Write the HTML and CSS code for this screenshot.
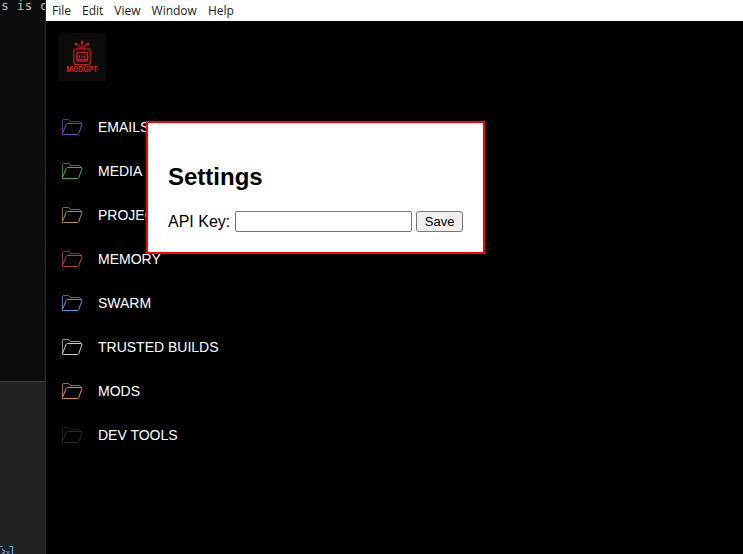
FILE: index.html
```html
<!DOCTYPE html>
<html lang="en">
<head>
<meta charset="utf-8">
<title>ModGPT</title>
<link rel="stylesheet" href="styles.css">
</head>
<body>
<svg class="defs" aria-hidden="true">
  <symbol id="folder" viewBox="0 0 24 24" fill="none" stroke="currentColor">
    <path class="back" d="M2.5 19.5V5.5Q2.5 4.500 3.5 4.500H8.500L10.500 6.500H19.500Q20.500 6.500 20.500 8.500"/>
    <path d="M2.5 18.5L6 9.500Q6.500 8.500 7.500 8.500H21Q22.200 8.500 21.900 9.500L18.900 18.500Q18.500 19.500 17.500 19.500H3.500Q2.500 19.500 2.500 18.500"/>
  </symbol>
</svg>
<div class="desktop">
  <aside class="editor">
    <div class="terminal">s is d</div>
    <div class="dock">
      <svg viewBox="0 0 16 9" fill="none" stroke="#6aa0dc" aria-hidden="true">
        <path d="M0 1.500H2.500M9 1.500H12.500V9M2 4L5 6.500L2 9" stroke-width="1.200"/>
        <path d="M6.500 6L9.500 9M9.500 6L6.500 9"/>
      </svg>
    </div>
  </aside>
  <div class="window">
    <nav class="menubar">
      <button>File</button><button>Edit</button><button>View</button><button>Window</button><button>Help</button>
    </nav>
    <main class="content">
      <div class="logo">
        <svg viewBox="0 0 48 33" fill="none" stroke="#c91c1c" role="img" aria-label="Robot">
          <rect x="15.800" y="15.800" width="16.400" height="15.700" rx="2" stroke-width="1.200"/>
          <rect x="19" y="19.500" width="10.500" height="8.500" rx="1" stroke-width="1.500"/>
          <path d="M21.500 22V25M24 22V25M26.500 22V25" stroke-width="1.200"/>
          <path d="M20 26.500H29" stroke-width="1.500"/>
          <path d="M24 16V9M22 16V13.500L18 11M26 16V13.500L30 11" stroke-width="1.200"/>
          <g fill="#c91c1c" stroke="none"><circle cx="24" cy="9" r="1.500"/><circle cx="18" cy="11" r="1.500"/><circle cx="30" cy="11" r="1.500"/></g>
        </svg>
        <span>MODGPT</span>
      </div>
      <ul class="folders">
        <li><a class="purple" href="#"><svg><use href="#folder"/></svg><span>EMAILS</span></a></li>
        <li><a class="green" href="#"><svg><use href="#folder"/></svg><span>MEDIA</span></a></li>
        <li><a class="gold" href="#"><svg><use href="#folder"/></svg><span>PROJECTS</span></a></li>
        <li><a class="red" href="#"><svg><use href="#folder"/></svg><span>MEMORY</span></a></li>
        <li><a class="blue" href="#"><svg><use href="#folder"/></svg><span>SWARM</span></a></li>
        <li><a class="white" href="#"><svg><use href="#folder"/></svg><span>TRUSTED BUILDS</span></a></li>
        <li><a class="orange" href="#"><svg><use href="#folder"/></svg><span>MODS</span></a></li>
        <li><a class="dark" href="#"><svg><use href="#folder"/></svg><span>DEV TOOLS</span></a></li>
      </ul>
      <form class="settings">
        <h2>Settings</h2>
        <div class="field">
          <label for="key">API Key:</label>
          <input id="key" type="text">
          <button type="button">Save</button>
        </div>
      </form>
    </main>
  </div>
</div>
</body>
</html>
```
FILE: styles.css
```css
* { box-sizing: border-box; }
body { margin: 0; background: #000; font-family: "Liberation Sans", Arial, sans-serif; }
.defs { display: none; }
.desktop { display: grid; grid-template-columns: 46px 1fr; height: 100vh; overflow: hidden; }

.editor {
  display: grid;
  grid-template-rows: 11fr 5fr;
  overflow: hidden;
  border-right: 1px solid #2a2a2a;
  background: #0c0c0c;
}
.terminal { padding-left: 1px; color: #bbb; font: 13px/12px "DejaVu Sans Mono", monospace; white-space: nowrap; overflow: hidden; }
.dock {
  display: flex;
  align-items: flex-end;
  border-top: 1px solid #444;
  background: #222;
  overflow: hidden;
}
.dock svg { width: 16px; height: 9px; }

.window { display: flex; flex-direction: column; min-width: 0; }
.menubar { display: flex; gap: 11px; height: 21px; padding-left: 6px; background: #fff; }
.menubar button {
  border: 0;
  padding: 0;
  background: none;
  color: #222;
  font: 12px/21px "Open Sans", "Noto Sans", sans-serif;
}
.content { position: relative; flex: 1; background: #000; padding: 12px; }
.logo { width: 48px; height: 48px; background: #0b0b0b; color: #c91c1c; text-align: center; }
.logo svg { display: block; width: 48px; height: 33px; }
.logo span { display: block; font: 800 7px/8px Inter, sans-serif; }
.folders { margin: 24px 0 0; padding: 0; list-style: none; }
.folders a {
  display: flex;
  align-items: center;
  gap: 14px;
  height: 44px;
  padding-left: 2px;
  text-decoration: none;
}
.folders svg { width: 24px; height: 24px; }
.folders span { color: #fff; font-size: 14px; }
.back { opacity: 0.75; }
.purple { color: #7c46b4; }
.green { color: #43ad59; }
.gold { color: #b58c3b; }
.red { color: #b64242; }
.blue { color: #5298dd; }
.white { color: #ccc; }
.orange { color: #e58a55; }
.dark { color: #2b2b2b; }

.settings {
  position: absolute;
  top: 100px;
  left: 100px;
  padding: 20px;
  border: 2px solid #f00;
  background: #fff;
  color: #000;
}
.settings h2 { margin: 20px 0; font-size: 24px; line-height: 28px; }
.field { font-size: 16px; line-height: 21px; height: 21px; white-space: nowrap; }
.field input,
.field button { height: 21px; border: 1px solid #767676; vertical-align: top; }
.field input { width: 177px; border-radius: 2px; }
.field button {
  width: 47px;
  padding: 0;
  border-radius: 3px;
  background: #efefef;
  color: #000;
  font: 13px/18px "Liberation Sans", Arial, sans-serif;
}
```
